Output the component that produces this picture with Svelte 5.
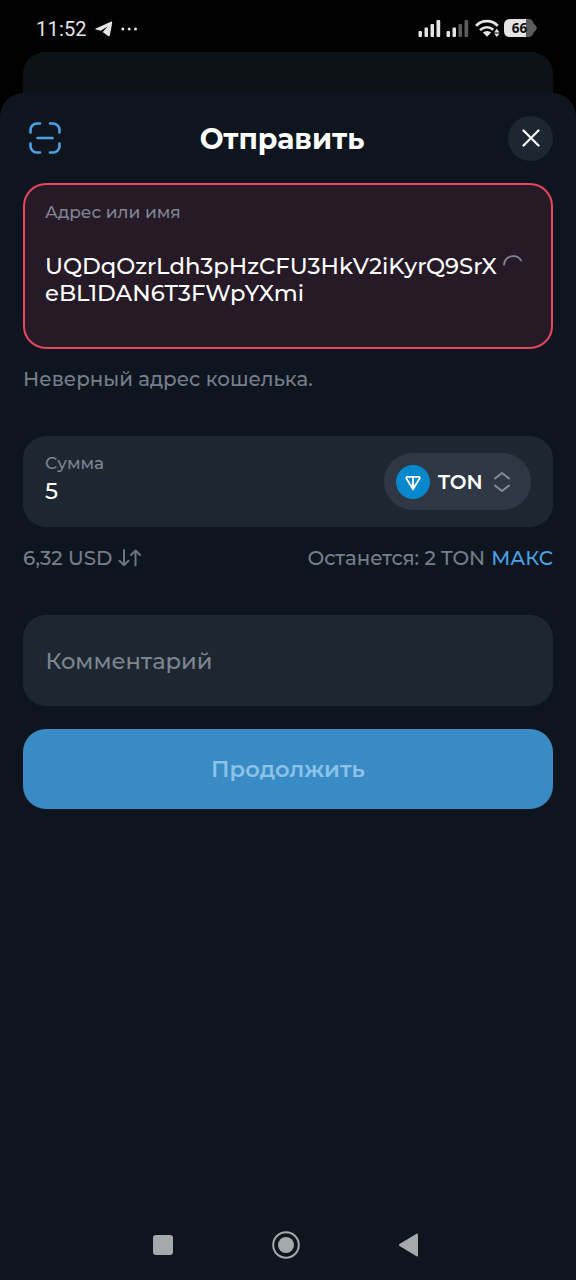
<script>
  let address = $state("UQDqOzrLdh3pHzCFU3HkV2iKyrQ9SrXeBL1DAN6T3FWpYXmi")
  let amount = $state("5")

  const LINE_LENGTH = 31

  let addressLines = $derived([
    address.slice(0, LINE_LENGTH),
    address.slice(LINE_LENGTH),
  ])
</script>

<div class="screen">
  <header class="status-bar">
    <div class="status-left">
      <span class="clock">11:52</span>
      <svg class="telegram" width="18" height="16" viewBox="0 0 18 16">
        <path d="M.8 7.500 15.800.7c1-.4 1.600 0 1.400 1L14.900 14.200c-.2 1.100-1 1.300-1.800.7L7.600 11 13 5.300 5.800 9.700 1 8.500C0 8.200 0 7.900.8 7.500Z" />
      </svg>
      <svg width="17" height="4" viewBox="0 0 17 4">
        <circle cx="1.8" cy="2" r="1.5" />
        <circle cx="8.2" cy="2" r="1.5" />
        <circle cx="14.5" cy="2" r="1.5" />
      </svg>
    </div>
    <div class="status-right">
      <svg width="23" height="18" viewBox="0 0 23 18">
        <rect x="0.5" y="12" width="3.5" height="6" rx="1" />
        <rect x="6.5" y="8.5" width="3.5" height="9.5" rx="1" />
        <rect x="12.5" y="5" width="3.5" height="13" rx="1" />
        <rect x="18.5" y="1" width="3.7" height="17" rx="1" />
      </svg>
      <svg class="second-sim" width="23" height="18" viewBox="0 0 23 18">
        <rect x="0.5" y="12" width="3.5" height="6" rx="1" />
        <rect x="6.5" y="8.5" width="3.5" height="9.5" rx="1" />
        <rect class="dim" x="12.5" y="5" width="3.5" height="13" rx="1" />
        <rect class="dim" x="18.5" y="1" width="3.7" height="17" rx="1" />
      </svg>
      <svg class="wifi" width="25" height="18" viewBox="0 0 25 18">
        <g fill="none" stroke="#e4e4e4" stroke-width="2.6">
          <path d="M1 6.800a15 15 0 0 1 21.800 0" />
          <path d="M5 11.200a9.600 9.600 0 0 1 13.300-.5" />
        </g>
        <path d="M7.800 13.600a6 6 0 0 1 8.400 0L12 17.800Z" />
        <path d="m21.800 9.800 2.700 3.600h-5.400ZM21.800 18l2.700-3.600h-5.400Z" />
      </svg>
      <svg class="battery" width="33" height="18" viewBox="0 0 33 18">
        <path class="dim" d="M20 0h4a5.500 5.500 0 0 1 5.500 4.200L32 7q1.500 2 0 4l-2.500 2.800A5.500 5.500 0 0 1 24 18h-4Z" />
        <path d="M22 0H5.500A5.500 5.500 0 0 0 0 5.500v7A5.500 5.500 0 0 0 5.500 18H22Z" />
        <text x="15.6" y="13.7" text-anchor="middle">66</text>
      </svg>
    </div>
  </header>

  <div class="back-sheet"></div>

  <main class="sheet">
    <div class="title-bar">
      <button class="scan" aria-label="QR">
        <svg width="32" height="32" viewBox="0 0 32 32">
          <path d="M1.500 10.500V8a6.500 6.500 0 0 1 6.500-6.500h3M21 1.500h3A6.500 6.500 0 0 1 30.500 8v2.500M30.500 21.500V24a6.500 6.500 0 0 1-6.500 6.500h-3M11 30.500H8A6.500 6.500 0 0 1 1.500 24v-2.500M8.500 16h15" />
        </svg>
      </button>
      <h1>Отправить</h1>
      <button class="close" aria-label="Закрыть">
        <svg width="18" height="18" viewBox="0 0 18 18">
          <path d="m1.500 1.500 15 15M16.500 1.500l-15 15" />
        </svg>
      </button>
    </div>

    <section class="field address">
      <span class="label">Адрес или имя</span>
      <div class="address-row">
        <div class="address-value">
          {#each addressLines as line, i (i)}
            <span>{line}</span>
          {/each}
        </div>
        <svg class="spinner" width="20" height="20" viewBox="0 0 20 20">
          <path d="M1 9.800a9.300 9.300 0 0 1 17.200-4.200" />
        </svg>
      </div>
    </section>
    <p class="error">Неверный адрес кошелька.</p>

    <section class="field amount">
      <div class="amount-input">
        <span class="label">Сумма</span>
        <span class="amount-value">{amount}</span>
      </div>
      <button class="token">
        <svg width="34" height="34" viewBox="0 0 34 34">
          <circle cx="17" cy="17" r="17" fill="#0788cc" />
          <path d="M11.300 11.800h11.400q1.500.3.900 1.800L17 24.200l-6.600-10.600q-.6-1.500.9-1.800ZM17 12v12" fill="none" stroke="#fff" stroke-width="1.8" stroke-linejoin="round" />
          <path d="m14.800 18 2.200 6 2.200-6v3L17 24.500 14.800 21Z" fill="#fff" />
        </svg>
        <span class="token-name">TON</span>
        <svg class="chevrons" width="16" height="20" viewBox="0 0 16 20">
          <path d="m1 6.500 7-5.500 7 5.500M1 13.500l7 5.500 7-5.500" />
        </svg>
      </button>
    </section>
    <div class="amount-info">
      <span class="fiat">6,32 USD</span>
      <svg class="swap" width="24" height="18" viewBox="0 0 24 18">
        <path d="M6 1v15M1.500 11.700l4.500 4.500 4.500-4.500M17.500 16.500v-15M13 6l4.500-4.500L22 6" />
      </svg>
      <span class="rest">Останется: 2 TON</span>
      <span class="max">МАКС</span>
    </div>

    <section class="field comment"><span>Комментарий</span></section>

    <button class="submit"><span>Продолжить</span></button>
  </main>

  <nav>
    <svg width="22" height="22" viewBox="0 0 22 22">
      <rect x="1" y="1" width="20" height="20" rx="3" />
    </svg>
    <svg width="28" height="28" viewBox="0 0 28 28">
      <circle cx="14" cy="14" r="12.8" fill="none" stroke="#a6a9ac" stroke-width="2" />
      <circle cx="14" cy="14" r="8" />
    </svg>
    <svg width="22" height="24" viewBox="0 0 22 24">
      <path d="M1.500 11 18.500.7q1.500-.7 1.500 1v20.600q0 1.700-1.500 1L1.500 13q-1.500-1 0-2Z" />
    </svg>
  </nav>
</div>

<style>
  :global(body) {
    margin: 0;
    background: #000;
  }

  .screen {
    display: flex;
    flex-direction: column;
    width: 576px;
    height: 1280px;
    overflow: hidden;
    background: #000;
    color: #fff;
    font-family: Montserrat, Inter, sans-serif;
    font-weight: 500;
    white-space: nowrap;
  }

  svg {
    display: block;
    flex: none;
  }

  button {
    padding: 0;
    border: 0;
    background: none;
    color: inherit;
    font: inherit;
  }

  .status-bar {
    display: flex;
    justify-content: space-between;
    align-items: center;
    box-sizing: border-box;
    height: 52px;
    padding: 5px 39px 0 36px;
    fill: #e4e4e4;
  }

  .status-left,
  .status-right {
    display: flex;
    align-items: center;
  }

  .status-right {
    margin-top: -1px;
  }

  .clock {
    color: #e4e4e4;
    font-family: Roboto, sans-serif;
    font-size: 20px;
    font-weight: 400;
    letter-spacing: 0.2px;
  }

  .telegram {
    margin: 0 8px 0 8px;
  }

  .second-sim {
    margin-left: 5px;
  }

  .wifi {
    margin: 0 4px 0 6px;
  }

  .dim {
    fill: #5c5c5c;
  }

  .battery text {
    fill: #111;
    font: 700 13.5px "Open Sans", sans-serif;
  }

  .back-sheet {
    flex: none;
    height: 41px;
    margin: 0 23px;
    border-radius: 22px 22px 0 0;
    background: #0d1217;
  }

  .sheet {
    flex: 1;
    padding: 22px 23px 0;
    border-radius: 24px 24px 0 0;
    background: #0f151e;
  }

  .title-bar {
    display: flex;
    justify-content: space-between;
    align-items: center;
    height: 46px;
  }

  .scan {
    width: 32px;
    margin-left: 6px;
  }

  .scan path {
    fill: none;
    stroke: #4aa3e6;
    stroke-width: 2.6;
    stroke-linecap: round;
  }

  h1 {
    margin: 2px 5px 0 0;
    font-size: 28.3px;
    font-weight: 700;
  }

  .close {
    display: grid;
    place-items: center;
    width: 45px;
    height: 45px;
    border-radius: 50%;
    background: #1e2631;
  }

  .close path {
    fill: none;
    stroke: #fff;
    stroke-width: 2.2;
    stroke-linecap: round;
  }

  .field {
    box-sizing: border-box;
    border-radius: 23px;
    background: #1e2731;
  }

  .label {
    color: #7f8491;
    font-size: 17px;
    line-height: 20px;
  }

  .address {
    display: flex;
    flex-direction: column;
    height: 166px;
    margin-top: 22px;
    padding: 17px 20px 0;
    border: 2px solid #e5475f;
    background: #261a26;
  }

  .address-row {
    display: flex;
    margin-top: 31px;
  }

  .address-value {
    display: flex;
    flex-direction: column;
    width: 458px;
    font-size: 22.7px;
    line-height: 27px;
  }

  .spinner {
    margin-top: 2px;
  }

  .spinner path {
    fill: none;
    stroke: #828693;
    stroke-width: 1.8;
    stroke-linecap: round;
  }

  .error {
    margin: 16px 0 0;
    color: #757e8c;
    font-size: 19.8px;
    line-height: 28px;
  }

  .amount {
    display: flex;
    justify-content: space-between;
    height: 91px;
    margin-top: 43px;
    padding: 17px 22px 0;
  }

  .amount-input {
    display: flex;
    flex-direction: column;
  }

  .amount-value {
    font-size: 22.7px;
    line-height: 36px;
  }

  .token {
    display: flex;
    align-items: center;
    width: 147px;
    height: 57px;
    padding-left: 11.5px;
    border-radius: 29px;
    background: #2f3744;
    box-sizing: border-box;
  }

  .token-name {
    width: 56px;
    margin: 1px 0 0 8.5px;
    font-size: 19.9px;
    font-weight: 600;
    text-align: left;
  }

  .chevrons path,
  .swap path {
    fill: none;
    stroke: #858b96;
    stroke-width: 2;
    stroke-linecap: round;
    stroke-linejoin: round;
  }

  .amount-info {
    display: flex;
    align-items: center;
    height: 28px;
    margin-top: 17px;
    color: #757e8c;
    font-size: 19.8px;
  }

  .swap {
    margin-left: 6px;
  }

  .swap path {
    stroke: #6b7480;
  }

  .rest {
    margin-left: auto;
  }

  .max {
    margin-left: 6px;
    color: #4aa3e6;
  }

  .comment {
    display: flex;
    align-items: center;
    height: 91px;
    margin-top: 43px;
    padding: 1px 0 0 22.5px;
    color: #7d8591;
    font-size: 22.6px;
  }

  .submit {
    display: block;
    width: 100%;
    height: 80px;
    margin-top: 23px;
    border-radius: 23px;
    background: #388bc4;
    color: #8dc2e8;
    font-size: 22.6px;
    font-weight: 600;
  }

  nav {
    display: flex;
    flex: none;
    justify-content: space-between;
    align-items: center;
    height: 70px;
    padding: 0 156px 0 152px;
    background: #0f151e;
    fill: #a6a9ac;
  }
</style>
